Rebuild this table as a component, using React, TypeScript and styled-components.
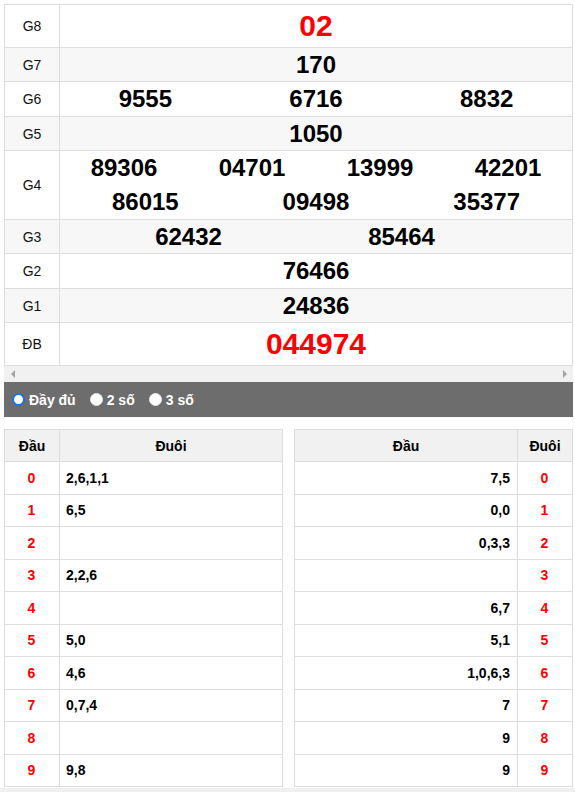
import React from "react";
import styled, { createGlobalStyle } from "styled-components";

const GlobalStyle = createGlobalStyle`
  html, body { margin: 0; padding: 0; background: #fff; }
  body { font-family: "Liberation Sans", Arial, sans-serif; color: #000; }
  * { box-sizing: border-box; }
`;

const Page = styled.div`
  width: 575px;
  padding: 4px 2px 0 4px;
`;

const Board = styled.div`
  border: 1px solid #dddddd;
  background: #fff;
`;

const Row = styled.div<{ $h: number; $alt?: boolean }>`
  display: grid;
  grid-template-columns: 55px 1fr;
  height: ${(p) => p.$h}px;
  background: ${(p) => (p.$alt ? "#f7f7f7" : "#fff")};
  & + & { border-top: 1px solid #dddddd; }
`;

const Label = styled.div`
  display: flex;
  align-items: center;
  justify-content: center;
  border-right: 1px solid #dddddd;
  font-size: 14px;
  color: #111;
`;

const Values = styled.div`
  display: flex;
  flex-direction: column;
  justify-content: center;
`;

const Line = styled.div<{ $cols: number; $pad?: string }>`
  display: grid;
  grid-template-columns: repeat(${(p) => p.$cols}, 1fr);
  padding: ${(p) => p.$pad || "0"};
  height: 34px;
  align-items: center;
`;

const Num = styled.span<{ $big?: boolean }>`
  text-align: center;
  font-weight: bold;
  font-size: ${(p) => (p.$big ? "30px" : "24px")};
  color: ${(p) => (p.$big ? "#ff0000" : "#000")};
  line-height: 1;
`;

const ScrollTrack = styled.div`
  height: 16px;
  background: #f1f1f1;
  display: flex;
  align-items: center;
  justify-content: space-between;
  padding: 0 6px 0 7px;
`;

const Arrow = styled.span<{ $dir: "left" | "right" }>`
  width: 0;
  height: 0;
  border-top: 4px solid transparent;
  border-bottom: 4px solid transparent;
  ${(p) =>
    p.$dir === "left"
      ? "border-right: 4px solid #a3a3a3;"
      : "border-left: 4px solid #a3a3a3;"}
`;

const RadioBar = styled.div`
  height: 35px;
  background: #6d6d6d;
  display: flex;
  align-items: center;
  padding-left: 8px;
  gap: 14px;
`;

const Option = styled.label`
  display: flex;
  align-items: center;
  gap: 4px;
  color: #fff;
  font-weight: bold;
  font-size: 14px;
  cursor: pointer;
`;

const Dot = styled.span<{ $on?: boolean }>`
  width: 13px;
  height: 13px;
  border-radius: 50%;
  background: #fff;
  border: ${(p) => (p.$on ? "2.5px solid #1a73e8" : "1px solid #e8e8e8")};
`;

const Stats = styled.div`
  display: flex;
  justify-content: space-between;
  margin-top: 12px;
`;

const StatTable = styled.div<{ $cols: string }>`
  width: 279px;
  display: grid;
  grid-template-columns: ${(p) => p.$cols};
  border-top: 1px solid #dddddd;
  border-left: 1px solid #dddddd;
`;

const Head = styled.div`
  height: 32px;
  background: #f1f1f1;
  border-right: 1px solid #dddddd;
  border-bottom: 1px solid #dddddd;
  display: flex;
  align-items: center;
  justify-content: center;
  font-weight: bold;
  font-size: 14px;
`;

const Cell = styled.div<{ $align: "center" | "left" | "right"; $red?: boolean }>`
  height: 32.5px;
  border-right: 1px solid #dddddd;
  border-bottom: 1px solid #dddddd;
  display: flex;
  align-items: center;
  justify-content: ${(p) =>
    p.$align === "center" ? "center" : p.$align === "left" ? "flex-start" : "flex-end"};
  padding: 0 7px 0 6px;
  font-weight: bold;
  font-size: 14px;
  color: ${(p) => (p.$red ? "#ff0000" : "#000")};
`;

const BottomStrip = styled.div`
  margin-top: 1px;
  height: 20px;
  background: #f0f0f0;
`;

type Prize = { label: string; lines: { nums: string[]; pad?: string }[]; h: number; big?: boolean };

const prizes: Prize[] = [
  { label: "G8", lines: [{ nums: ["02"] }], h: 42, big: true },
  { label: "G7", lines: [{ nums: ["170"] }], h: 34 },
  { label: "G6", lines: [{ nums: ["9555", "6716", "8832"] }], h: 35 },
  { label: "G5", lines: [{ nums: ["1050"] }], h: 34 },
  {
    label: "G4",
    lines: [
      { nums: ["89306", "04701", "13999", "42201"] },
      { nums: ["86015", "09498", "35377"] },
    ],
    h: 69,
  },
  { label: "G3", lines: [{ nums: ["62432", "85464"], pad: "0 64px 0 22px" }], h: 34 },
  { label: "G2", lines: [{ nums: ["76466"] }], h: 35 },
  { label: "G1", lines: [{ nums: ["24836"] }], h: 34 },
  { label: "ĐB", lines: [{ nums: ["044974"] }], h: 43, big: true },
];

const dau = ["2,6,1,1", "6,5", "", "2,2,6", "", "5,0", "4,6", "0,7,4", "", "9,8"];
const duoi = ["7,5", "0,0", "0,3,3", "", "6,7", "5,1", "1,0,6,3", "7", "9", "9"];

export default function App() {
  return (
    <>
      <GlobalStyle />
      <Page>
        <Board>
          {prizes.map((p, i) => (
            <Row key={p.label} $h={p.h} $alt={i % 2 === 1}>
              <Label>{p.label}</Label>
              <Values>
                {p.lines.map((l, j) => (
                  <Line key={j} $cols={l.nums.length} $pad={l.pad}>
                    {l.nums.map((n) => (
                      <Num key={n} $big={p.big}>
                        {n}
                      </Num>
                    ))}
                  </Line>
                ))}
              </Values>
            </Row>
          ))}
        </Board>
        <ScrollTrack>
          <Arrow $dir="left" />
          <Arrow $dir="right" />
        </ScrollTrack>
        <RadioBar>
          <Option>
            <Dot $on />
            Đầy đủ
          </Option>
          <Option>
            <Dot />2 số
          </Option>
          <Option>
            <Dot />3 số
          </Option>
        </RadioBar>
        <Stats>
          <StatTable $cols="55px 1fr">
            <Head>Đầu</Head>
            <Head>Đuôi</Head>
            {dau.map((v, i) => (
              <React.Fragment key={i}>
                <Cell $align="center" $red>
                  {i}
                </Cell>
                <Cell $align="left">{v}</Cell>
              </React.Fragment>
            ))}
          </StatTable>
          <StatTable $cols="1fr 55px">
            <Head>Đầu</Head>
            <Head>Đuôi</Head>
            {duoi.map((v, i) => (
              <React.Fragment key={i}>
                <Cell $align="right">{v}</Cell>
                <Cell $align="center" $red>
                  {i}
                </Cell>
              </React.Fragment>
            ))}
          </StatTable>
        </Stats>
      </Page>
      <BottomStrip />
    </>
  );
}
